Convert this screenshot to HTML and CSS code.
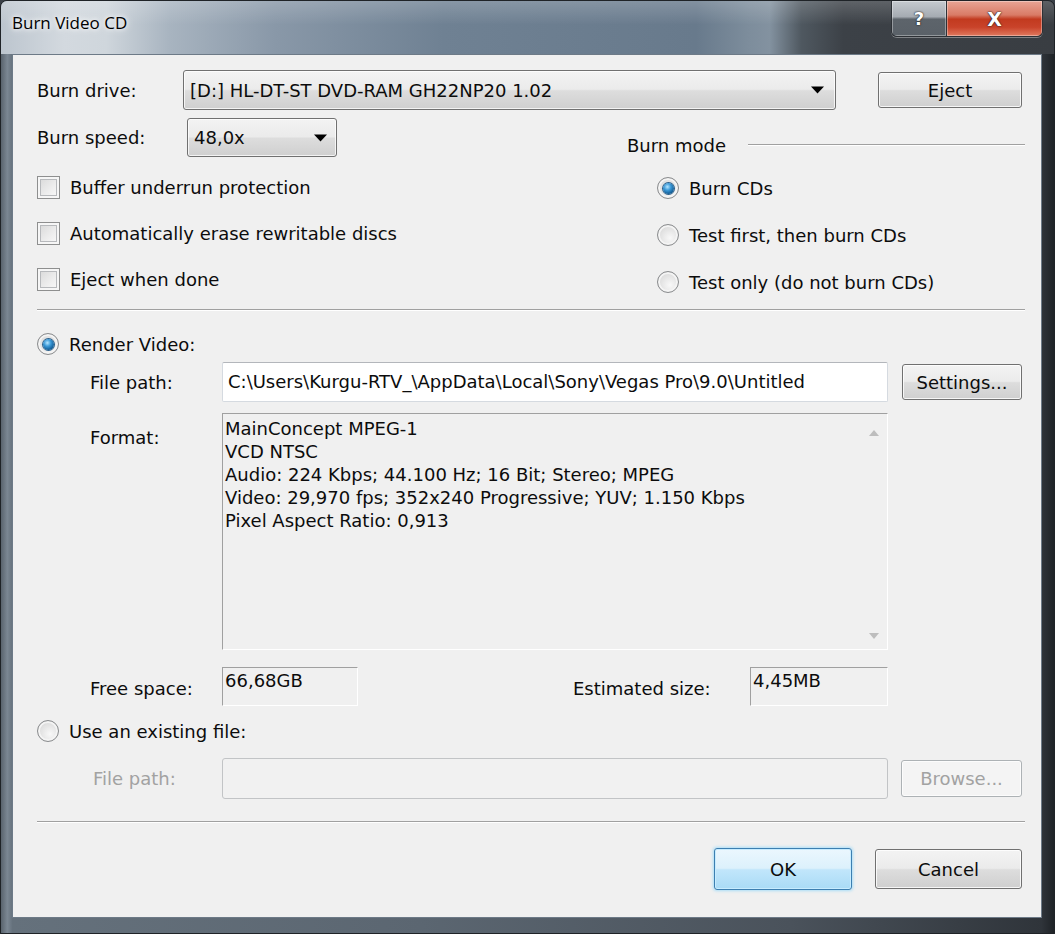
FILE: index.html
```html
<!DOCTYPE html>
<html>
<head>
<meta charset="utf-8">
<title>Burn Video CD</title>
<link rel="stylesheet" href="styles.css">
</head>
<body>
<div class="window">
  <div class="titlebar">
    <span class="title">Burn Video CD</span>
    <div class="caption">
      <div class="cap cap-help">?</div>
      <div class="cap cap-close">X</div>
    </div>
  </div>

  <div class="client">
    <div class="row row-drive">
      <span class="lbl lbl-drive">Burn drive:</span>
      <div class="combo combo-drive">
        <span class="combo-text">[D:] HL-DT-ST DVD-RAM GH22NP20 1.02</span>
        <svg class="drop" width="13" height="8" viewBox="0 0 13 8"><path d="M0 0.5h13L6.5 7.5z"/></svg>
      </div>
      <button class="btn btn-eject">Eject</button>
    </div>

    <div class="opts">
      <div class="opts-left">
        <div class="row row-speed">
          <span class="lbl lbl-speed">Burn speed:</span>
          <div class="combo combo-speed">
            <span class="combo-text">48,0x</span>
            <svg class="drop" width="13" height="8" viewBox="0 0 13 8"><path d="M0 0.5h13L6.5 7.5z"/></svg>
          </div>
        </div>
        <div class="check check-first"><span class="box"></span><span>Buffer underrun protection</span></div>
        <div class="check"><span class="box"></span><span>Automatically erase rewritable discs</span></div>
        <div class="check"><span class="box"></span><span>Eject when done</span></div>
      </div>
      <div class="opts-right">
        <div class="group-head"><span>Burn mode</span><span class="rule"></span></div>
        <div class="radio-row radio-first"><span class="radio on"><span class="dot"></span></span><span>Burn CDs</span></div>
        <div class="radio-row"><span class="radio"></span><span>Test first, then burn CDs</span></div>
        <div class="radio-row"><span class="radio"></span><span>Test only (do not burn CDs)</span></div>
      </div>
    </div>

    <div class="sep sep-top"></div>

    <div class="radio-row row-render"><span class="radio on"><span class="dot"></span></span><span>Render Video:</span></div>

    <div class="sub row-path">
      <span class="lbl sub-lbl">File path:</span>
      <div class="field">C:\Users\Kurgu-RTV_\AppData\Local\Sony\Vegas Pro\9.0\Untitled</div>
      <button class="btn btn-settings">Settings...</button>
    </div>

    <div class="sub row-format">
      <span class="lbl sub-lbl lbl-format">Format:</span>
      <div class="format-box">
        <div class="format-text">MainConcept MPEG-1<br>VCD NTSC<br>Audio: 224 Kbps; 44.100 Hz; 16 Bit; Stereo; MPEG<br>Video: 29,970 fps; 352x240 Progressive; YUV; 1.150 Kbps<br>Pixel Aspect Ratio: 0,913</div>
        <div class="vscroll">
          <svg width="10" height="6" viewBox="0 0 10 6"><path d="M0 6h10L5 0z"/></svg>
          <svg width="10" height="6" viewBox="0 0 10 6"><path d="M0 0h10L5 6z"/></svg>
        </div>
      </div>
    </div>

    <div class="sub row-space">
      <span class="lbl sub-lbl lbl-static">Free space:</span>
      <div class="static static-free">66,68GB</div>
      <span class="lbl lbl-static lbl-est">Estimated size:</span>
      <div class="static static-est">4,45MB</div>
    </div>

    <div class="radio-row row-existing"><span class="radio"></span><span>Use an existing file:</span></div>

    <div class="sub row-path2">
      <span class="lbl sub-lbl disabled">File path:</span>
      <div class="field field-disabled"></div>
      <button class="btn btn-browse" disabled>Browse...</button>
    </div>

    <div class="sep sep-bottom"></div>

    <div class="row row-actions">
      <button class="btn btn-ok">OK</button>
      <button class="btn btn-cancel">Cancel</button>
    </div>
  </div>
</div>
</body>
</html>
```

FILE: styles.css
```css
* { box-sizing: border-box; }

html, body { margin: 0; padding: 0; }

body {
  width: 1055px;
  height: 934px;
  overflow: hidden;
  background: #3a4047;
  font-family: "DejaVu Sans", "Liberation Sans", sans-serif;
  font-size: 18px;
  color: #0c0c0c;
}

/* ---------- window frame ---------- */
.window {
  width: 1055px;
  height: 934px;
  display: flex;
  flex-direction: column;
  border: 1px solid #1f2327;
  border-radius: 7px 7px 0 0;
  background:
    linear-gradient(90deg, #59636d 0, #7b8793 0.6%, #65717c 1.1%, #5b6671 40%, #4a525b 75%, #2f343a 98.8%, #1f2327 100%);
}

.titlebar {
  height: 53px;
  display: flex;
  align-items: flex-start;
  padding-left: 11px;
  background:
    linear-gradient(180deg, rgba(255,255,255,0.18) 0, rgba(255,255,255,0) 45%),
    linear-gradient(90deg, #bcc5ce 0, #d3d9df 6%, #cfd6dc 10%, #a8b4c0 16%, #8998a8 26%, #6f8193 42%, #687a8c 66%, #7d8d9c 71%, #8392a0 73%, #4f5860 76%, #3c4147 80%, #393d42 100%);
  border-radius: 6px 6px 0 0;
}

.title {
  font-family: "Open Sans", "DejaVu Sans", sans-serif;
  font-size: 17px;
  line-height: 24px;
  margin-top: 10px;
  color: #000;
  text-shadow: 0 0 8px #fff, 0 0 4px #fff;
}

.caption {
  margin-left: auto;
  margin-right: 11px;
  display: flex;
  height: 36px;
  border: 1px solid #2d3136;
  border-top: none;
  border-radius: 0 0 6px 6px;
  overflow: hidden;
  box-shadow: 0 1px 0 rgba(255,255,255,0.35);
}

.cap {
  display: flex;
  align-items: center;
  justify-content: center;
  height: 100%;
  color: #fff;
  font-family: "DejaVu Sans", sans-serif;
  font-weight: bold;
  font-size: 18px;
  text-shadow: 0 0 2px #222, 0 0 1px #000;
  box-shadow: inset 0 0 0 1px rgba(255,255,255,0.35);
}

.cap-help {
  width: 55px;
  background: linear-gradient(180deg, #c5cacf 0, #a5abb2 45%, #5d646b 52%, #5a6168 100%);
  border-right: 1px solid #2d3136;
}

.cap-close {
  width: 95px;
  font-size: 19px;
  background: linear-gradient(180deg, #e8a595 0, #d97b66 40%, #c23a1f 52%, #c9432a 75%, #e07a5f 100%);
}

/* ---------- client area ---------- */
.client {
  height: 864px;
  margin: 0 12px 0 11px;
  border: 1px solid #6d7a87;
  background: #f0f0f0;
  padding: 15px 19px 0 24px;
  display: flex;
  flex-direction: column;
}

.row { display: flex; align-items: center; }

.lbl { white-space: nowrap; }

.disabled { color: #a2a2a2; }

/* top rows */
.row-drive { height: 40px; }
.lbl-drive { width: 146px; }

.combo {
  display: flex;
  align-items: center;
  border: 1px solid #707070;
  border-radius: 3px;
  background: linear-gradient(180deg, #f3f3f3 0, #ebebeb 48%, #dddddd 52%, #cfcfcf 100%);
  box-shadow: inset 0 0 0 1px rgba(255,255,255,0.75);
  padding: 0 11px 0 6px;
}
.combo-text { flex: 1; white-space: nowrap; }
.drop { fill: #000; }

.combo-drive { width: 653px; height: 40px; }

.btn {
  font-family: inherit;
  font-size: 18px;
  color: #0c0c0c;
  border: 1px solid #707070;
  border-radius: 3px;
  background: linear-gradient(180deg, #f3f3f3 0, #ebebeb 48%, #dddddd 52%, #cfcfcf 100%);
  box-shadow: inset 0 0 0 1px rgba(255,255,255,0.8);
  padding: 0;
}

.btn-eject { width: 144px; height: 36px; margin-left: auto; }

.opts { display: flex; margin-top: 8px; }
.opts-left { width: 590px; display: flex; flex-direction: column; }
.opts-right { flex: 1; display: flex; flex-direction: column; }

.row-speed { height: 39px; }
.lbl-speed { width: 150px; }
.combo-speed { width: 150px; height: 39px; padding-right: 9px; }

.check { display: flex; align-items: center; height: 44px; margin-top: 2px; }
.check-first { margin-top: 8px; }

.box {
  width: 23px;
  height: 23px;
  margin-right: 10px;
  border: 1px solid #8e8f8f;
  background: linear-gradient(135deg, #d6d6d6 0, #eeeeee 60%, #fbfbfb 100%);
  box-shadow: inset 0 0 0 2px #f6f6f6, inset 0 0 0 3px #b7b9bc;
}

.group-head { display: flex; align-items: center; height: 30px; margin-top: 12px; }
.rule {
  flex: 1;
  height: 2px;
  margin-left: 22px;
  margin-right: -3px;
  border-top: 1px solid #a0a0a0;
  border-bottom: 1px solid #fff;
}

.radio-row { display: flex; align-items: center; height: 44px; }
.opts-right .radio-row { padding-left: 30px; margin-top: 3px; }
.opts-right .radio-first { margin-top: 6px; }

.radio {
  width: 22px;
  height: 22px;
  margin-right: 10px;
  border-radius: 50%;
  border: 1px solid #8a8c8e;
  background: radial-gradient(circle at 60% 65%, #f8f8f8 0, #e6e6e6 45%, #cfcfcf 100%);
  box-shadow: inset 0 0 0 2px #f4f4f4;
  display: flex;
  align-items: center;
  justify-content: center;
  flex: none;
}
.dot {
  width: 11px;
  height: 11px;
  border-radius: 50%;
  background: radial-gradient(circle at 40% 35%, #b6e6ff 0, #3c9ad8 35%, #14609a 70%, #0d4675 100%);
  box-shadow: 0 0 0 1px #2a5f8a;
}

/* separators */
.sep {
  height: 2px;
  margin-right: -3px;
  border-top: 1px solid #a0a0a0;
  border-bottom: 1px solid #fff;
}
.sep-top { margin-top: 5px; }
.sep-bottom { margin-top: 22px; }

/* render section */
.row-render { height: 30px; margin-top: 18px; }

.sub { display: flex; align-items: center; padding-left: 53px; }
.sub-lbl { width: 132px; }

.row-path { height: 40px; margin-top: 3px; }

.field {
  width: 666px;
  height: 40px;
  background: #fff;
  border: 1px solid #d5dae0;
  border-top-color: #b3b6bb;
  border-radius: 2px;
  padding: 0 5px;
  line-height: 38px;
  white-space: nowrap;
  overflow: hidden;
}

.btn-settings { width: 120px; height: 36px; margin-left: 14px; }

.row-format { align-items: flex-start; height: 237px; margin-top: 11px; }
.lbl-format { padding-top: 14px; }

.format-box {
  width: 666px;
  height: 237px;
  display: flex;
  border-top: 1px solid #a0a0a0;
  border-left: 1px solid #a0a0a0;
  border-right: 1px solid #fff;
  border-bottom: 1px solid #fff;
}
.format-text {
  flex: 1;
  padding: 3px 0 0 2px;
  line-height: 23px;
  white-space: nowrap;
  overflow: hidden;
}
.vscroll {
  width: 27px;
  display: flex;
  flex-direction: column;
  align-items: center;
  justify-content: space-between;
  padding: 16px 0 10px;
  fill: #bdbdbd;
}

.row-space { height: 39px; margin-top: 17px; align-items: flex-start; }
.lbl-static { padding-top: 11px; }

.static {
  height: 39px;
  padding: 3px 2px 0;
  border-top: 1px solid #a0a0a0;
  border-left: 1px solid #a0a0a0;
  border-right: 1px solid #fff;
  border-bottom: 1px solid #fff;
  line-height: 20px;
}
.static-free { width: 136px; }
.lbl-est { width: 177px; margin-left: 215px; }
.static-est { width: 138px; }

.row-existing { height: 30px; margin-top: 10px; }

.row-path2 { height: 41px; margin-top: 12px; }
.row-path2 .sub-lbl { padding-left: 3px; }

.field-disabled {
  height: 41px;
  background: #f1f1f1;
  border: 1px solid #c2c4c6;
  border-radius: 3px;
}

.btn-browse {
  width: 121px;
  height: 37px;
  margin-left: 13px;
  color: #a2a2a2;
  border-color: #adb2b5;
  background: #f4f4f4;
  box-shadow: inset 0 0 0 1px #fcfcfc;
}

/* dialog buttons */
.row-actions { justify-content: flex-end; margin-top: 25px; height: 42px; }

.btn-ok {
  width: 138px;
  height: 42px;
  border-color: #3c7fb1;
  background: linear-gradient(180deg, #ebf7fe 0, #dcf1fc 48%, #c1e6fb 52%, #a9dbf6 100%);
  box-shadow: inset 0 0 0 1px #c7ecff, 0 0 3px 1px #a9ddf7;
}

.btn-cancel { width: 147px; height: 40px; margin-left: 23px; }
```
